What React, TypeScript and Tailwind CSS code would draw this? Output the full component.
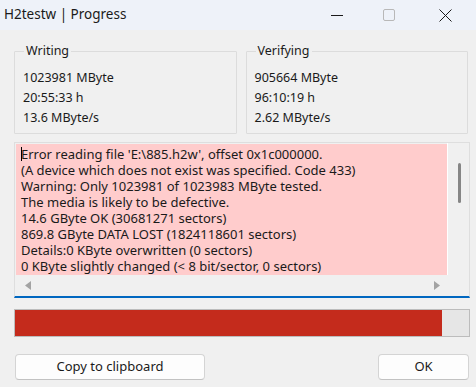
import React from "react";

const font = { fontFamily: '"Noto Sans", "Open Sans", sans-serif' };

function GroupBox({ title, lines }: { title: string; lines: string[] }) {
  return (
    <div className="relative flex-1 h-[83px] border border-[#dcdcdc] rounded-[1px]">
      <span className="absolute left-[9px] top-[-9px] bg-[#f0f0f0] px-[2px] text-[12.5px] leading-[16px] text-[#1a1a1a]">
        {title}
      </span>
      <div className="flex flex-col pl-[8px] pt-[16px] text-[12.5px] leading-[20px] text-[#1a1a1a]">
        {lines.map((l) => (
          <div key={l}>{l}</div>
        ))}
      </div>
    </div>
  );
}

export default function App() {
  const log = [
    "Error reading file 'E:\\885.h2w', offset 0x1c000000.",
    "(A device which does not exist was specified. Code 433)",
    "Warning: Only 1023981 of 1023983 MByte tested.",
    "The media is likely to be defective.",
    "14.6 GByte OK (30681271 sectors)",
    "869.8 GByte DATA LOST (1824118601 sectors)",
    "Details:0 KByte overwritten (0 sectors)",
    "0 KByte slightly changed (< 8 bit/sector, 0 sectors)",
  ];
  return (
    <div className="w-[476px] h-[387px] bg-[#f0f0f0] flex flex-col overflow-hidden" style={font}>
      {/* Title bar */}
      <div className="h-[30px] bg-[#eef2f9] flex items-center justify-between shrink-0">
        <span className="pl-[4px] text-[13.5px] text-[#1a1a1a] leading-none">H2testw | Progress</span>
        <div className="flex items-center h-full">
          <div className="w-[46px] h-full flex items-center justify-center">
            <svg width="12" height="12" viewBox="0 0 12 12">
              <line x1="0" y1="6.5" x2="12" y2="6.5" stroke="#1a1a1a" strokeWidth="1" />
            </svg>
          </div>
          <div className="w-[58px] h-full flex items-center justify-center">
            <svg width="12" height="12" viewBox="0 0 12 12">
              <rect x="0.5" y="0.5" width="11" height="11" rx="1.5" fill="none" stroke="#b8b8b8" strokeWidth="1" />
            </svg>
          </div>
          <div className="w-[58px] h-full flex items-center justify-center pr-[4px]">
            <svg width="13" height="13" viewBox="0 0 13 13">
              <path d="M0.5 0.5 L12.5 12.5 M12.5 0.5 L0.5 12.5" stroke="#1a1a1a" strokeWidth="1" />
            </svg>
          </div>
        </div>
      </div>

      {/* Group boxes */}
      <div className="flex gap-[9px] pl-[14px] pr-[8px] mt-[21px]">
        <GroupBox title="Writing" lines={["1023981 MByte", "20:55:33 h", "13.6 MByte/s"]} />
        <GroupBox title="Verifying" lines={["905664 MByte", "96:10:19 h", "2.62 MByte/s"]} />
      </div>

      {/* Log area */}
      <div className="ml-[14px] mr-[6px] mt-[8px] h-[156px] border border-[#dedede] border-b-2 border-b-[#0067c0] bg-[#f0f0f0] flex flex-col">
        <div className="flex flex-1 min-h-0">
          <div className="relative flex-1 ml-px mt-px bg-[#ffcccc] pl-[5px] pt-[2px] text-[13px] leading-[16px] text-[#1a1a1a] overflow-hidden whitespace-nowrap">
            <span className="absolute left-[5px] top-[3px] w-px h-[14px] bg-black" />
            {log.map((l) => (
              <div key={l}>{l}</div>
            ))}
          </div>
          <div className="w-[22px] flex justify-center pt-[20px] border-l border-white">
            <div className="w-[3px] h-[40px] rounded-full bg-[#868686] ml-[1px]" />
          </div>
        </div>
        <div className="h-[21px] flex items-center justify-between pl-[10px] pr-[29px]">
          <svg width="6" height="9" viewBox="0 0 6 9">
            <path d="M6 0 L0 4.5 L6 9 Z" fill="#a3a3a3" />
          </svg>
          <svg width="6" height="9" viewBox="0 0 6 9">
            <path d="M0 0 L6 4.5 L0 9 Z" fill="#a3a3a3" />
          </svg>
        </div>
      </div>

      {/* Progress bar */}
      <div className="ml-[14px] mr-[6px] mt-[11px] h-[28px] border border-[#bcbcbc] bg-[#e6e6e6] flex">
        <div className="bg-[#c42b1c] h-full" style={{ width: "94.1%" }} />
      </div>

      {/* Buttons */}
      <div className="flex justify-between pl-[15px] pr-[7px] mt-[17px]">
        <button className="w-[190px] h-[26px] bg-[#fdfdfd] border border-[#d4d4d4] border-b-[#c2c2c2] rounded-[4px] text-[13px] text-[#1a1a1a]">
          Copy to clipboard
        </button>
        <button className="w-[91px] h-[26px] bg-[#fdfdfd] border border-[#d4d4d4] border-b-[#c2c2c2] rounded-[4px] text-[13px] text-[#1a1a1a]">
          OK
        </button>
      </div>
    </div>
  );
}
